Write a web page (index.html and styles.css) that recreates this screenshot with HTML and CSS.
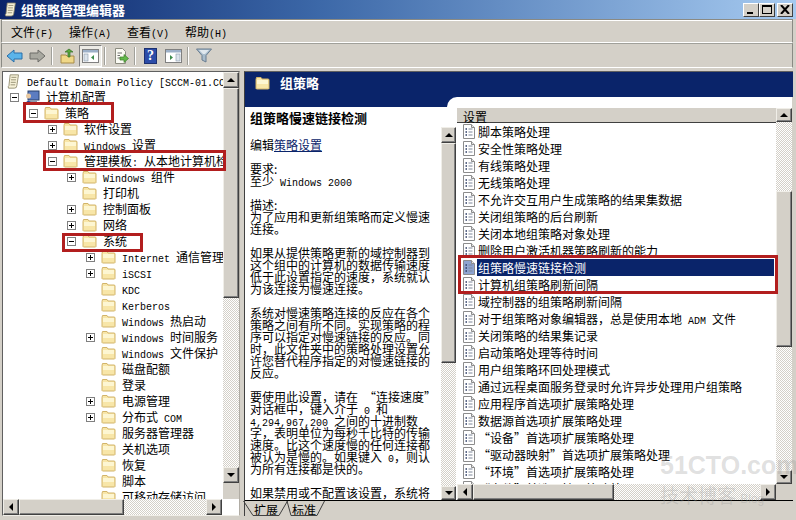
FILE: index.html
```html
<!DOCTYPE html>
<html lang="zh-CN">
  <head>
    <meta charset="utf-8">
    <title>组策略管理编辑器</title>
    <link rel="stylesheet" href="styles.css">
  </head>
  <body>
    <!-- icons used more than once -->
    <svg class="defs" width="0" height="0">
      <symbol id="folder" viewBox="0 0 15 14">
        <path d="M1 3.5 L1.5 1.5 H6 L7 3 H13.5 L14 4 V12.5 L13.5 13 H1.5 L1 12.5 Z" fill="#f8e6a8" stroke="#d2b46a"/>
        <rect x="2" y="4" width="11" height="4" fill="#fdf6d2"/>
      </symbol>
      <symbol id="doc" viewBox="0 0 14 15">
        <path d="M1.5 .5 H9.5 L12.5 3.5 V14.5 H1.5 Z" fill="var(--doc-fill, #fff)" stroke="#8c8c8c"/>
        <path d="M9.5 .5 V3.5 H12.5" fill="#e4e4e4" stroke="#8c8c8c"/>
        <path d="M3.5 5 H5 M3.5 8 H5 M3.5 11 H5" stroke="#2c3c64" stroke-width="1.4"/>
        <path d="M6.5 5 H10.5 M6.5 8 H10.5 M6.5 11 H10.5" stroke="#7c8698"/>
      </symbol>
      <symbol id="scroll" viewBox="0 0 16 18">
        <path d="M4 1 H14 L12 14 Q12 17 9 17 H2 Q1 15 2.500 14 Z" fill="#f6f1d8" stroke="#8a8468"/>
        <path d="M5.500 4 H11.500 M5 7 H11 M4.700 10 H10.700 M4.500 13 H10" stroke="#8a8468"/>
      </symbol>
    </svg>

    <div class="window">
      <div class="titlebar">
        <svg class="title-icon" width="13" height="15"><use href="#scroll"/></svg>
        <span class="title-text">组策略管理编辑器</span>
        <div class="win-buttons">
          <button class="win-btn"><span class="glyph-min"></span></button>
          <button class="win-btn"><span class="glyph-max"></span></button>
          <button class="win-btn win-close">
            <svg width="10" height="9"><path d="M1 0 L9 9 M9 0 L1 9" stroke="#000" stroke-width="2"/></svg>
          </button>
        </div>
      </div>

      <div class="menubar">
        <span class="menu-item">文件<span class="en">(F)</span></span>
        <span class="menu-item">操作<span class="en">(A)</span></span>
        <span class="menu-item">查看<span class="en">(V)</span></span>
        <span class="menu-item">帮助<span class="en">(H)</span></span>
      </div>

      <div class="toolbar">
        <span class="tool">
          <svg width="17" height="14"><path d="M1 7 L8 1 V4 H16 V10 H8 V13 Z" fill="#5ab4ea" stroke="#2a6ea8"/></svg>
        </span>
        <span class="tool">
          <svg width="17" height="14"><path d="M16 7 L9 1 V4 H1 V10 H9 V13 Z" fill="#a8a8a0" stroke="#6c6c68"/></svg>
        </span>
        <span class="tool-sep"></span>
        <span class="tool">
          <svg width="16" height="16"><path d="M1 7 H6 L7 8 H14 V15 H1 Z" fill="#f0d888" stroke="#a88c48"/><path d="M8 9 V4 H5 L9 1 L13 4 H10 V9 Z" fill="#58a83c" stroke="#387028" stroke-width=".7"/></svg>
        </span>
        <span class="tool tool-on">
          <svg width="17" height="14"><rect x=".5" y=".5" width="16" height="13" fill="#fff" stroke="#808080"/><rect x="1" y="1" width="15" height="2.500" fill="#9cb0c8"/><rect x="2" y="5" width="4" height="7" fill="#dce4ec" stroke="#8898a8" stroke-width=".6"/><path d="M12 6 L9 8.500 L12 11 Z" fill="#3c8c4c"/></svg>
        </span>
        <span class="tool-sep"></span>
        <span class="tool">
          <svg width="16" height="16"><path d="M2.500 .5 H9.500 L12.500 3.500 V15.500 H2.500 Z" fill="#fbfbf4" stroke="#8c8c80"/><path d="M4.500 5 H9 M4.500 7.500 H7 M4.500 10 H7" stroke="#707070"/><path d="M7 9 H11 V6.500 L15.500 10.500 L11 14.500 V12 H7 Z" fill="#62b84a" stroke="#3c8028" stroke-width=".7"/></svg>
        </span>
        <span class="tool-sep"></span>
        <span class="tool">
          <span class="help-icon">?</span>
        </span>
        <span class="tool">
          <svg width="17" height="14"><rect x=".5" y=".5" width="16" height="13" fill="#fff" stroke="#808080"/><rect x="1" y="1" width="15" height="2.500" fill="#9cb0c8"/><rect x="11" y="5" width="4" height="7" fill="#dce4ec" stroke="#8898a8" stroke-width=".6"/><path d="M5 6 L8 8.500 L5 11 Z" fill="#3c8c4c"/></svg>
        </span>
        <span class="tool-sep"></span>
        <span class="tool">
          <svg width="16" height="15"><path d="M.5 1 H15.500 L10 7.500 V14 L6 12 V7.500 Z" fill="#a8bccc" stroke="#687c90"/><path d="M3 2 H13 L9 6 H7 Z" fill="#e0e8ee"/></svg>
        </span>
      </div>

      <div class="main">
        <!-- tree on the left -->
        <div class="tree-pane">
          <div class="pane-row">
            <div class="tree">
              <div class="tree-row tree-root">
                <svg class="root-icon" width="15" height="15"><use href="#scroll"/></svg>
                <span><span class="en">Default Domain Policy [SCCM-01.CO</span></span>
              </div>
              <div class="tree-row l1">
                <span class="box minus"></span>
                <svg class="folder" width="15" height="14"><rect x="3" y="1" width="11" height="9" fill="#5c7cc0" stroke="#28406c"/><rect x="5" y="10" width="7" height="2" fill="#8c98ac"/><circle cx="3.500" cy="6" r="2.500" fill="#e8c8a0"/><path d="M0 14 Q3.500 7 7 14 Z" fill="#28489c"/></svg>
                <span>计算机配置</span>
              </div>
              <div class="tree-row l2"><span class="box minus"></span><svg class="folder" width="15" height="14"><use href="#folder"/></svg><span>策略</span></div>
              <div class="tree-row l3"><span class="box plus"></span><svg class="folder" width="15" height="14"><use href="#folder"/></svg><span>软件设置</span></div>
              <div class="tree-row l3"><span class="box plus"></span><svg class="folder" width="15" height="14"><use href="#folder"/></svg><span><span class="en">Windows </span>设置</span></div>
              <div class="tree-row l3"><span class="box minus"></span><svg class="folder" width="15" height="14"><use href="#folder"/></svg><span>管理模板<span class="en">: </span>从本地计算机检索</span></div>
              <div class="tree-row l4"><span class="box plus"></span><svg class="folder" width="15" height="14"><use href="#folder"/></svg><span><span class="en">Windows </span>组件</span></div>
              <div class="tree-row l4"><span class="box none"></span><svg class="folder" width="15" height="14"><use href="#folder"/></svg><span>打印机</span></div>
              <div class="tree-row l4"><span class="box plus"></span><svg class="folder" width="15" height="14"><use href="#folder"/></svg><span>控制面板</span></div>
              <div class="tree-row l4"><span class="box plus"></span><svg class="folder" width="15" height="14"><use href="#folder"/></svg><span>网络</span></div>
              <div class="tree-row l4"><span class="box minus"></span><svg class="folder" width="15" height="14"><use href="#folder"/></svg><span>系统</span></div>
              <div class="tree-row l5"><span class="box plus"></span><svg class="folder" width="15" height="14"><use href="#folder"/></svg><span><span class="en">Internet </span>通信管理</span></div>
              <div class="tree-row l5"><span class="box plus"></span><svg class="folder" width="15" height="14"><use href="#folder"/></svg><span><span class="en">iSCSI</span></span></div>
              <div class="tree-row l5"><span class="box none"></span><svg class="folder" width="15" height="14"><use href="#folder"/></svg><span><span class="en">KDC</span></span></div>
              <div class="tree-row l5"><span class="box none"></span><svg class="folder" width="15" height="14"><use href="#folder"/></svg><span><span class="en">Kerberos</span></span></div>
              <div class="tree-row l5"><span class="box none"></span><svg class="folder" width="15" height="14"><use href="#folder"/></svg><span><span class="en">Windows </span>热启动</span></div>
              <div class="tree-row l5"><span class="box plus"></span><svg class="folder" width="15" height="14"><use href="#folder"/></svg><span><span class="en">Windows </span>时间服务</span></div>
              <div class="tree-row l5"><span class="box none"></span><svg class="folder" width="15" height="14"><use href="#folder"/></svg><span><span class="en">Windows </span>文件保护</span></div>
              <div class="tree-row l5"><span class="box none"></span><svg class="folder" width="15" height="14"><use href="#folder"/></svg><span>磁盘配额</span></div>
              <div class="tree-row l5"><span class="box none"></span><svg class="folder" width="15" height="14"><use href="#folder"/></svg><span>登录</span></div>
              <div class="tree-row l5"><span class="box plus"></span><svg class="folder" width="15" height="14"><use href="#folder"/></svg><span>电源管理</span></div>
              <div class="tree-row l5"><span class="box plus"></span><svg class="folder" width="15" height="14"><use href="#folder"/></svg><span>分布式<span class="en"> COM</span></span></div>
              <div class="tree-row l5"><span class="box none"></span><svg class="folder" width="15" height="14"><use href="#folder"/></svg><span>服务器管理器</span></div>
              <div class="tree-row l5"><span class="box none"></span><svg class="folder" width="15" height="14"><use href="#folder"/></svg><span>关机选项</span></div>
              <div class="tree-row l5"><span class="box none"></span><svg class="folder" width="15" height="14"><use href="#folder"/></svg><span>恢复</span></div>
              <div class="tree-row l5"><span class="box none"></span><svg class="folder" width="15" height="14"><use href="#folder"/></svg><span>脚本</span></div>
              <div class="tree-row l5"><span class="box none"></span><svg class="folder" width="15" height="14"><use href="#folder"/></svg><span>可移动存储访问</span></div>
            </div>
            <div class="vscroll">
              <span class="sb-btn"><i class="arrow up"></i></span>
              <span class="thumb tree-vthumb"></span>
              <span class="track"></span>
              <span class="sb-btn"><i class="arrow down"></i></span>
              <span class="corner"></span>
            </div>
          </div>
          <div class="hscroll tree-hscroll">
            <span class="sb-btn"><i class="arrow left"></i></span>
            <span class="thumb tree-hthumb"></span>
            <span class="track"></span>
            <span class="sb-btn"><i class="arrow right"></i></span>
          </div>
        </div>

        <!-- details on the right -->
        <div class="detail">
          <div class="detail-head">
            <svg class="head-icon" width="15" height="14"><use href="#folder"/></svg>
            <span class="head-title">组策略</span>
          </div>
          <div class="detail-body">
            <div class="desc-col">
              <div class="navy-strip"></div>
              <div class="desc-row">
                <div class="desc">
                  <p class="desc-title">组策略慢速链接检测</p>
                  <p>编辑<a class="desc-link">策略设置</a></p>
                  <p>要求:<br>至少<span class="en"> Windows 2000</span></p>
                  <p>描述:<br>为了应用和更新组策略而定义慢速<br>连接。</p>
                  <p>如果从提供策略更新的域控制器到<br>这个组中的计算机的数据传输速度<br>低于此设置指定的速度，系统就认<br>为该连接为慢速连接。</p>
                  <p>系统对慢速策略连接的反应在各个<br>策略之间有所不同。实现策略的程<br>序可以指定对慢速链接的反应。同<br>时，此文件夹中的策略处理设置允<br>许您替代程序指定的对慢速链接的<br>反应。</p>
                  <p>要使用此设置，请在<span class="en"> </span>“连接速度”<br>对话框中，键入介于<span class="en"> 0 </span>和<br><span class="en">4,294,967,200 </span>之间的十进制数<br>字，表明单位为每秒千比特的传输<br>速度。比这个速度慢的任何连接都<br>被认为是慢的。如果键入<span class="en"> 0</span>，则认<br>为所有连接都是快的。</p>
                  <p>如果禁用或不配置该设置，系统将</p>
                </div>
                <div class="desc-scroll">
                  <span class="desc-gap"></span>
                  <span class="sb-btn"><i class="arrow up"></i></span>
                  <span class="thumb desc-thumb"></span>
                  <span class="track"></span>
                  <span class="sb-btn short"><i class="arrow down"></i></span>
                </div>
              </div>
            </div>
            <div class="list-col">
              <div class="list-main">
                <div class="list-head">设置</div>
                <div class="list">
                  <div class="list-row"><svg width="14" height="15"><use href="#doc"/></svg><span>脚本策略处理</span></div>
                  <div class="list-row"><svg width="14" height="15"><use href="#doc"/></svg><span>安全性策略处理</span></div>
                  <div class="list-row"><svg width="14" height="15"><use href="#doc"/></svg><span>有线策略处理</span></div>
                  <div class="list-row"><svg width="14" height="15"><use href="#doc"/></svg><span>无线策略处理</span></div>
                  <div class="list-row"><svg width="14" height="15"><use href="#doc"/></svg><span>不允许交互用户生成策略的结果集数据</span></div>
                  <div class="list-row"><svg width="14" height="15"><use href="#doc"/></svg><span>关闭组策略的后台刷新</span></div>
                  <div class="list-row"><svg width="14" height="15"><use href="#doc"/></svg><span>关闭本地组策略对象处理</span></div>
                  <div class="list-row"><svg width="14" height="15"><use href="#doc"/></svg><span>删除用户激活机器策略刷新的能力</span></div>
                  <div class="list-row selected"><svg width="14" height="15"><use href="#doc"/></svg><span>组策略慢速链接检测</span></div>
                  <div class="list-row"><svg width="14" height="15"><use href="#doc"/></svg><span>计算机组策略刷新间隔</span></div>
                  <div class="list-row"><svg width="14" height="15"><use href="#doc"/></svg><span>域控制器的组策略刷新间隔</span></div>
                  <div class="list-row"><svg width="14" height="15"><use href="#doc"/></svg><span>对于组策略对象编辑器，总是使用本地<span class="en"> ADM </span>文件</span></div>
                  <div class="list-row"><svg width="14" height="15"><use href="#doc"/></svg><span>关闭策略的结果集记录</span></div>
                  <div class="list-row"><svg width="14" height="15"><use href="#doc"/></svg><span>启动策略处理等待时间</span></div>
                  <div class="list-row"><svg width="14" height="15"><use href="#doc"/></svg><span>用户组策略环回处理模式</span></div>
                  <div class="list-row"><svg width="14" height="15"><use href="#doc"/></svg><span>通过远程桌面服务登录时允许异步处理用户组策略</span></div>
                  <div class="list-row"><svg width="14" height="15"><use href="#doc"/></svg><span>应用程序首选项扩展策略处理</span></div>
                  <div class="list-row"><svg width="14" height="15"><use href="#doc"/></svg><span>数据源首选项扩展策略处理</span></div>
                  <div class="list-row"><svg width="14" height="15"><use href="#doc"/></svg><span>“设备”首选项扩展策略处理</span></div>
                  <div class="list-row"><svg width="14" height="15"><use href="#doc"/></svg><span>“驱动器映射”首选项扩展策略处理</span></div>
                  <div class="list-row"><svg width="14" height="15"><use href="#doc"/></svg><span>“环境”首选项扩展策略处理</span></div>
                  <div class="list-row"><svg width="14" height="15"><use href="#doc"/></svg><span>“文件”首选项扩展策略处理</span></div>
                </div>
                <div class="hscroll">
                  <span class="sb-btn"><i class="arrow left"></i></span>
                  <span class="thumb list-hthumb"></span>
                  <span class="track"></span>
                  <span class="sb-btn"><i class="arrow right"></i></span>
                </div>
              </div>
              <div class="vscroll">
                <span class="sb-btn short"><i class="arrow up"></i></span>
                <span class="track list-track-top"></span>
                <span class="thumb list-vthumb"></span>
                <span class="track"></span>
                <span class="sb-btn short"><i class="arrow down"></i></span>
                <span class="corner"></span>
              </div>
            </div>
          </div>
          <div class="tabs">
            <span class="tab tab-first">
              <svg class="tab-shape" width="46" height="15"><path d="M.5 0 L10 14.500 H36 L44.500 0" fill="none" stroke="#404040"/></svg>
              扩展
            </span>
            <span class="tab">
              <svg class="tab-shape" width="40" height="15"><path d="M1 0 L5 14.500 H31 L38.500 0" fill="none" stroke="#404040"/></svg>
              标准
            </span>
          </div>
        </div>
      </div>

      <!-- red annotation boxes drawn over the screenshot -->
      <div class="mark mark-policy"></div>
      <div class="mark mark-admin"></div>
      <div class="mark mark-system"></div>
      <div class="mark mark-list"></div>

      <div class="watermark">
        <div class="wm-big">51CTO.com</div>
        <div class="wm-small">技术博客 <span class="wm-blog">Blog</span></div>
      </div>
    </div>
  </body>
</html>
```

FILE: styles.css
```css
* {
  box-sizing: border-box;
}

html,
body {
  margin: 0;
  padding: 0;
  width: 796px;
  height: 520px;
  overflow: hidden;
}

body {
  font-family: "Noto Sans CJK SC", "Liberation Sans", sans-serif;
  font-size: 12px;
  line-height: 12px;
  color: #000;
  background-color: #d4d0c8;
}

.defs {
  display: block;
  height: 0;
}

.en {
  font-family: "Liberation Mono", monospace;
  font-size: 10px;
  line-height: 0;
  white-space: pre;
}

.window {
  position: relative;
  display: flex;
  flex-direction: column;
  height: 520px;
}

/* title bar */
.titlebar {
  display: flex;
  align-items: center;
  height: 19px;
  padding-left: 4px;
  background: linear-gradient(90deg, #0a246a 0%, #3c68a8 40%, #a6caf0 100%);
}

.title-icon {
  margin-right: 4px;
}

.title-text {
  font-size: 13px;
  font-weight: bold;
  color: #fff;
}

.win-buttons {
  display: flex;
  margin-left: auto;
  margin-right: 3px;
}

.win-btn {
  display: flex;
  align-items: center;
  justify-content: center;
  width: 16px;
  height: 14px;
  padding: 0;
  background-color: #d4d0c8;
  border: 1px solid;
  border-color: #fff #404040 #404040 #fff;
}

.win-close {
  margin-left: 2px;
}

.glyph-min {
  width: 6px;
  height: 2px;
  margin-top: 7px;
  margin-right: 2px;
  background-color: #000;
}

.glyph-max {
  width: 10px;
  height: 9px;
  border: 1px solid #000;
  border-top-width: 2px;
}

/* menu and toolbar */
.menubar {
  display: flex;
  align-items: center;
  height: 24px;
  margin: 0 3px 0 1px;
  padding: 1px 0 0 1px;
  border: 1px solid #8a8a84;
  border-bottom-color: #fff;
  box-shadow: inset 0 1px #fff;
}

.menu-item {
  padding: 0 8px;
}

.toolbar {
  display: flex;
  align-items: center;
  height: 25px;
  margin: 0 3px 0 1px;
  padding-left: 1px;
  border-left: 1px solid #8a8a84;
  border-right: 1px solid #8a8a84;
  border-top: 1px solid #a0a09a;
  border-bottom: 1px solid #fff;
}

.tool {
  display: flex;
  align-items: center;
  justify-content: center;
  width: 23px;
  height: 22px;
}

.tool-on {
  background-color: #ecebe6;
  border: 1px solid;
  border-color: #808080 #fff #fff #808080;
}

.tool-sep {
  width: 2px;
  height: 18px;
  margin: 0 3px 0 2px;
  border-left: 1px solid #a0a09a;
  border-right: 1px solid #fff;
}

.help-icon {
  display: block;
  width: 13px;
  height: 16px;
  font-family: "Liberation Serif", serif;
  font-size: 14px;
  font-weight: bold;
  line-height: 14px;
  text-align: center;
  color: #fff;
  background-color: #2c4ca8;
  border: 1px solid #1c3070;
}

/* panes */
.main {
  display: flex;
  height: 445px;
  margin-top: 3px;
  padding-left: 2px;
}

.tree-pane {
  display: flex;
  flex-direction: column;
  width: 238px;
  height: 445px;
  background-color: #fff;
  border: 1px solid;
  border-color: #606060 #b0aca4 #f0eee8 #606060;
}

.pane-row {
  display: flex;
  flex: 1;
  min-height: 0;
}

.tree {
  flex: 1;
  min-width: 0;
  padding-top: 1px;
  overflow: hidden;
}

.tree-row {
  display: flex;
  align-items: center;
  height: 16px;
  white-space: nowrap;
}

.tree-root {
  padding-left: 3px;
}

.root-icon {
  flex: none;
  margin-right: 6px;
}

.l1 { padding-left: 7px; }
.l2 { padding-left: 26px; }
.l3 { padding-left: 45px; }
.l4 { padding-left: 64px; }
.l5 { padding-left: 83px; }

.box {
  position: relative;
  flex: none;
  width: 9px;
  height: 9px;
  margin-right: 6px;
  background-color: #fff;
  border: 1px solid #808080;
}

.box.none {
  visibility: hidden;
}

.box.minus::before,
.box.plus::before {
  content: "";
  position: absolute;
  left: 1px;
  top: 3px;
  width: 5px;
  height: 1px;
  background-color: #000;
}

.box.plus::after {
  content: "";
  position: absolute;
  left: 3px;
  top: 1px;
  width: 1px;
  height: 5px;
  background-color: #000;
}

.folder {
  flex: none;
  margin-right: 6px;
}

/* scrollbars */
.vscroll {
  display: flex;
  flex: none;
  flex-direction: column;
  width: 16px;
}

.hscroll {
  display: flex;
  flex: none;
  height: 16px;
}

.tree-hscroll {
  margin-right: 17px;
}

.sb-btn,
.thumb {
  flex: none;
  background-color: #d4d0c8;
  border: 1px solid;
  border-color: #f0eee8 #404040 #404040 #f0eee8;
  box-shadow: inset -1px -1px #808080;
}

.sb-btn {
  display: flex;
  align-items: center;
  justify-content: center;
  width: 16px;
  height: 16px;
}

.sb-btn.short {
  height: 14px;
}

.track {
  flex: 1;
  background: repeating-conic-gradient(#d4d0c8 0 25%, #fff 0 50%) 0 0 / 2px 2px;
}

.corner {
  flex: none;
  height: 16px;
  background-color: #d4d0c8;
}

.arrow {
  display: block;
  width: 0;
  height: 0;
  border: 4px solid transparent;
}

.arrow.up { margin-top: -4px; border-bottom-color: #000; }
.arrow.down { margin-top: 4px; border-top-color: #000; }
.arrow.left { margin-left: -4px; border-right-color: #000; }
.arrow.right { margin-left: 4px; border-left-color: #000; }

.tree-vthumb { height: 210px; }
.tree-hthumb { width: 105px; }
.desc-thumb { height: 220px; }
.list-hthumb { width: 141px; }
.list-vthumb { height: 156px; }
.list-track-top { flex: none; height: 69px; }

/* detail pane */
.detail {
  display: flex;
  flex-direction: column;
  width: 549px;
  height: 445px;
  margin-left: 4px;
  border-top: 1px solid #606060;
  border-left: 1px solid #404040;
}

.detail-head {
  display: flex;
  align-items: center;
  flex: none;
  height: 25px;
  padding: 0 0 3px 10px;
  background-color: #0a246a;
}

.head-icon {
  margin-right: 10px;
}

.head-title {
  font-size: 13px;
  font-weight: bold;
  color: #fff;
}

.detail-body {
  display: flex;
  flex: none;
  height: 403px;
}

.desc-col {
  display: flex;
  flex: none;
  flex-direction: column;
  width: 212px;
  background-color: #fff;
}

.navy-strip {
  display: flex;
  flex: none;
  justify-content: flex-end;
  height: 10px;
  background-color: #0a246a;
}

.navy-strip::after {
  content: "";
  width: 10px;
  height: 10px;
  background-color: #fff;
  border-top-left-radius: 10px;
}

.desc-row {
  display: flex;
  flex: 1;
  min-height: 0;
}

.desc {
  flex: none;
  width: 196px;
  padding: 5px 0 0 5px;
  overflow: hidden;
  white-space: nowrap;
}

.desc p {
  margin: 0 0 12px;
}

.desc .desc-title {
  margin-bottom: 15px;
  font-size: 13px;
  font-weight: bold;
}

.desc-link {
  color: #0a246a;
  text-decoration: underline;
}

.desc-scroll {
  display: flex;
  flex: none;
  flex-direction: column;
  width: 15px;
}

.desc-scroll .sb-btn {
  width: 15px;
}

.desc-gap {
  flex: none;
  height: 20px;
}

.list-col {
  display: flex;
  flex: none;
  width: 335px;
  padding-top: 11px;
  background-color: #fff;
}

.list-main {
  display: flex;
  flex: none;
  flex-direction: column;
  width: 319px;
}

.list-head {
  flex: none;
  height: 15px;
  padding: 3px 0 0 6px;
  background-color: #d4d0c8;
  border-bottom: 1px solid #404040;
}

.list {
  flex: 1;
  min-height: 0;
  overflow: hidden;
}

.list-row {
  display: flex;
  align-items: center;
  height: 17px;
  padding-left: 5px;
  white-space: nowrap;
}

.list-row svg {
  flex: none;
  margin-right: 1px;
}

.list-row span {
  padding-left: 1px;
}

.list-row .en {
  padding-left: 0;
}

.list-row.selected {
  --doc-fill: #8ea4d0;
}

.list-row.selected span {
  flex: 1;
  height: 17px;
  margin-right: 2px;
  line-height: 17px;
  color: #fff;
  background-color: #0a246a;
}

/* tabs */
.tabs {
  display: flex;
  flex: none;
  height: 16px;
  border-top: 1px solid #000;
}

.tab {
  position: relative;
  width: 38px;
  height: 15px;
  padding: 3px 0 0 5px;
}

.tab-first {
  width: 42px;
  padding-left: 9px;
}

.tab-shape {
  position: absolute;
  left: -1px;
  top: 0;
}

.tab-first .tab-shape {
  left: -2px;
}

/* red annotations */
.mark {
  position: absolute;
  border: 3px solid #b21e1e;
}

.mark-policy { left: 23px; top: 102px; width: 91px; height: 21px; }
.mark-admin { left: 43px; top: 150px; width: 183px; height: 21px; }
.mark-system { left: 62px; top: 233px; width: 81px; height: 19px; }
.mark-list { left: 458px; top: 255px; width: 320px; height: 39px; }

/* watermark */
.watermark {
  position: absolute;
  left: 660px;
  top: 451px;
  width: 132px;
  color: rgba(150, 150, 150, 0.3);
  pointer-events: none;
}

.wm-big {
  font-family: "Liberation Sans", sans-serif;
  font-size: 25px;
  font-weight: bold;
  line-height: 28px;
  white-space: nowrap;
}

.wm-small {
  margin-top: 5px;
  font-size: 19px;
  line-height: 22px;
  white-space: nowrap;
}

.wm-blog {
  font-family: "Liberation Sans", sans-serif;
  font-size: 12px;
}
```
